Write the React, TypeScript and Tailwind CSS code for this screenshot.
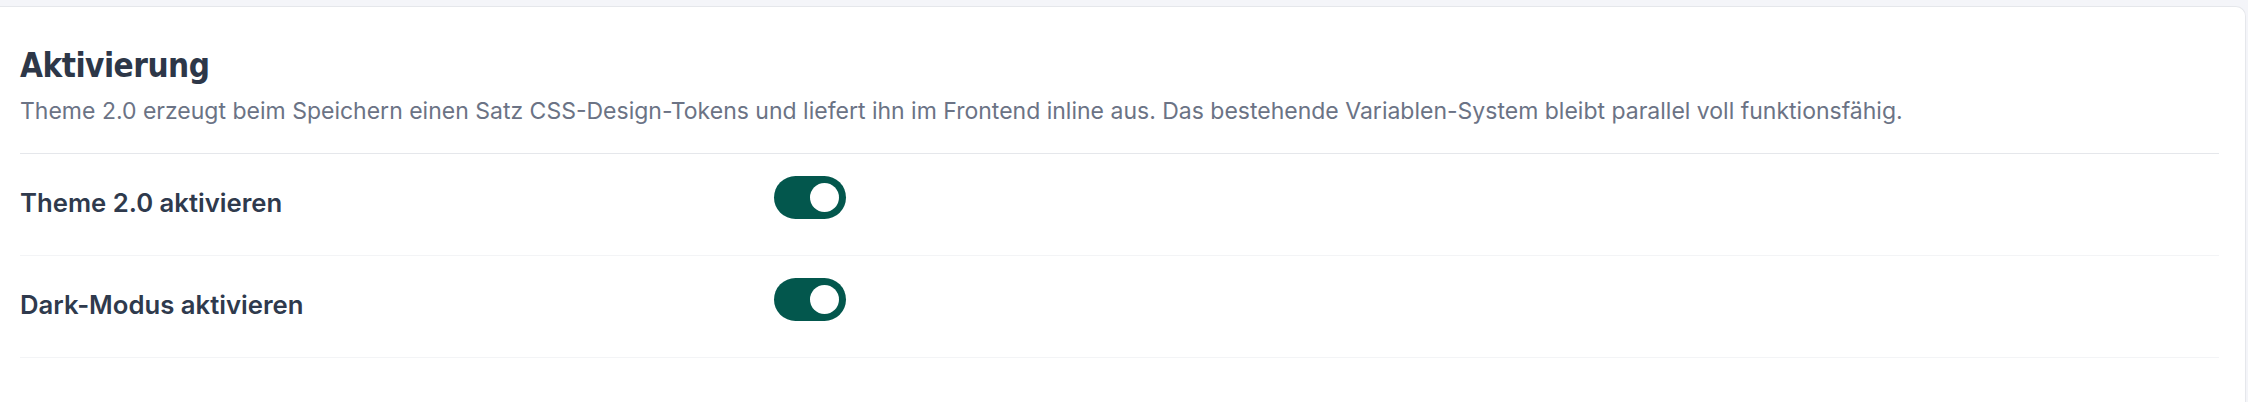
import { useState } from "react";

function Toggle({ on, onChange }: { on: boolean; onChange: () => void }) {
  return (
    <button
      type="button"
      role="switch"
      aria-checked={on}
      onClick={onChange}
      className={
        "flex h-[43px] w-[72px] shrink-0 items-center rounded-full px-[7px] transition-colors " +
        (on ? "justify-end bg-[#03574d]" : "justify-start bg-[#d1d5db]")
      }
    >
      <span className="h-[29px] w-[29px] rounded-full bg-white" />
    </button>
  );
}

function SettingRow({ label, on, onChange }: { label: string; on: boolean; onChange: () => void }) {
  return (
    <div className="flex items-start border-b border-[#f3f4f6] pt-[22px] pb-[34px]">
      <div className="w-[754px] shrink-0 pt-[9px] text-[25.7px] leading-[36px] font-semibold text-[#2f3a4d]">
        {label}
      </div>
      <Toggle on={on} onChange={onChange} />
    </div>
  );
}

export default function App() {
  const [theme, setTheme] = useState(true);
  const [dark, setDark] = useState(true);

  return (
    <div
      className="min-h-[402px] bg-[#f4f5f9] pt-[6px] pr-[2px]"
      style={{ fontFamily: "Inter, 'Noto Sans', sans-serif" }}
    >
      <div className="min-h-[396px] rounded-tr-[10px] border-t border-r border-[#e5e7eb] bg-white pl-[20px] pr-[26px]">
        <div className="border-b border-[#e5e7eb] pt-[37px] pb-[26px]">
          <h2
            className="text-[33px] leading-[44px] font-bold tracking-[-0.5px] text-[#2d3748]"
            style={{ fontFamily: "'DejaVu Sans Condensed', 'Liberation Sans Narrow', sans-serif" }}
          >
            Aktivierung
          </h2>
          <p className="mt-[7px] text-[23px] leading-[32px] text-[#6b7385]">
            Theme 2.0 erzeugt beim Speichern einen Satz CSS-Design-Tokens und liefert ihn im Frontend inline aus. Das
            bestehende Variablen-System bleibt parallel voll funktionsfähig.
          </p>
        </div>
        <div>
          <SettingRow label="Theme 2.0 aktivieren" on={theme} onChange={() => setTheme((v) => !v)} />
          <SettingRow label="Dark-Modus aktivieren" on={dark} onChange={() => setDark((v) => !v)} />
        </div>
      </div>
    </div>
  );
}
